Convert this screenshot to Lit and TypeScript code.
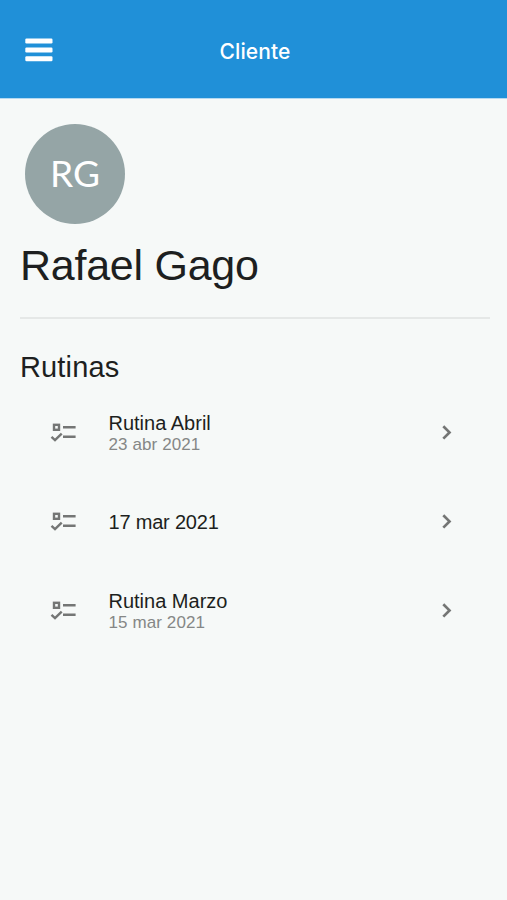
import { LitElement, html, css, svg } from "lit";
import { customElement } from "lit/decorators.js";

interface Routine { title: string; date?: string }

const ROUTINES: Routine[] = [
  { title: "Rutina Abril", date: "23 abr 2021" },
  { title: "17 mar 2021" },
  { title: "Rutina Marzo", date: "15 mar 2021" },
];

@customElement("app-root")
export class AppRoot extends LitElement {
  static styles = css`
    :host { display: block; min-height: 900px; background: #f6f9f8; color: #1d1f20;
      font-family: "Liberation Sans", Arial, sans-serif; }
    header { background: #2090d8; color: #fff; display: grid;
      grid-template-columns: 25px 28px 1fr 50px; align-items: center; border-bottom: 1px solid #b4d9f1;
      box-sizing: border-box; height: 99px; }
    .menu { grid-column: 2; display: block; margin-top: 2px; }
    .bar-title { grid-column: 3; text-align: center; font-family: Inter, sans-serif; font-weight: 500;
      font-size: 21px; line-height: 26px; letter-spacing: 0.1px; padding-top: 6px; }
    main { padding: 25px 17px 0 20px; }
    .avatar { width: 100px; height: 100px; margin-left: 5px; border-radius: 50%; background: #95a5a6;
      color: #fff; display: flex; align-items: center; justify-content: center; font-size: 37px;
      line-height: 44px; font-family: Lato, sans-serif; }
    .avatar span { padding-bottom: 3px; }
    h1 { margin: 15px 0 0; font-size: 43px; line-height: 52px; font-weight: 400; letter-spacing: -0.25px;
      white-space: nowrap; }
    hr { margin: 26px 0 0; border: 0; height: 2px; background: #e5e8e7; }
    h2 { margin: 31px 0 0; font-size: 29px; line-height: 34px; font-weight: 400; letter-spacing: 0.15px; }
    ul { list-style: none; margin: 4px 0 0; padding: 0 36px 0 30px; }
    li { height: 89px; display: grid; grid-template-columns: 58.5px 1fr 13px; align-items: center; }
    .title { font-size: 20px; line-height: 22px; }
    .title.single { letter-spacing: -0.2px; }
    .date { font-size: 17px; line-height: 20px; color: #858786; letter-spacing: 0.1px; padding-top: 1px;
      margin-bottom: -1px; }
    svg { display: block; }
  `;

  render() {
    return html`
      <header>
        <svg class="menu" width="28" height="24" viewBox="0 0 28 24" fill="#fff">
          ${[0.5, 9.5, 18.2].map((y) => svg`<rect x="0.3" y=${y} width="27.2" height="5" rx="1.2"/>`)}
        </svg>
        <div class="bar-title">Cliente</div>
      </header>
      <main>
        <div class="avatar"><span>RG</span></div>
        <h1>Rafael Gago</h1>
        <hr />
        <h2>Rutinas</h2>
        <ul>
          ${ROUTINES.map((r) => html`<li>
            <svg width="27" height="22" viewBox="0 0 27 22" fill="none" stroke="#747675" stroke-width="2.4">
              <rect x="4" y="2.8" width="5" height="5"/>
              <path d="M13 5.3H25.6M13 14.8H25.6M1.5 14.8L5 18.1L11.7 11.6"/>
            </svg>
            <div>
              <div class="title ${r.date ? "" : "single"}">${r.title}</div>
              ${r.date ? html`<div class="date">${r.date}</div>` : null}
            </div>
            <svg width="13" height="16" viewBox="0 0 13 16" fill="none" stroke="#747675" stroke-width="2.7">
              <path d="M2.3 1.2L8.5 7.4L2.3 13.6"/>
            </svg>
          </li>`)}
        </ul>
      </main>`;
  }
}
